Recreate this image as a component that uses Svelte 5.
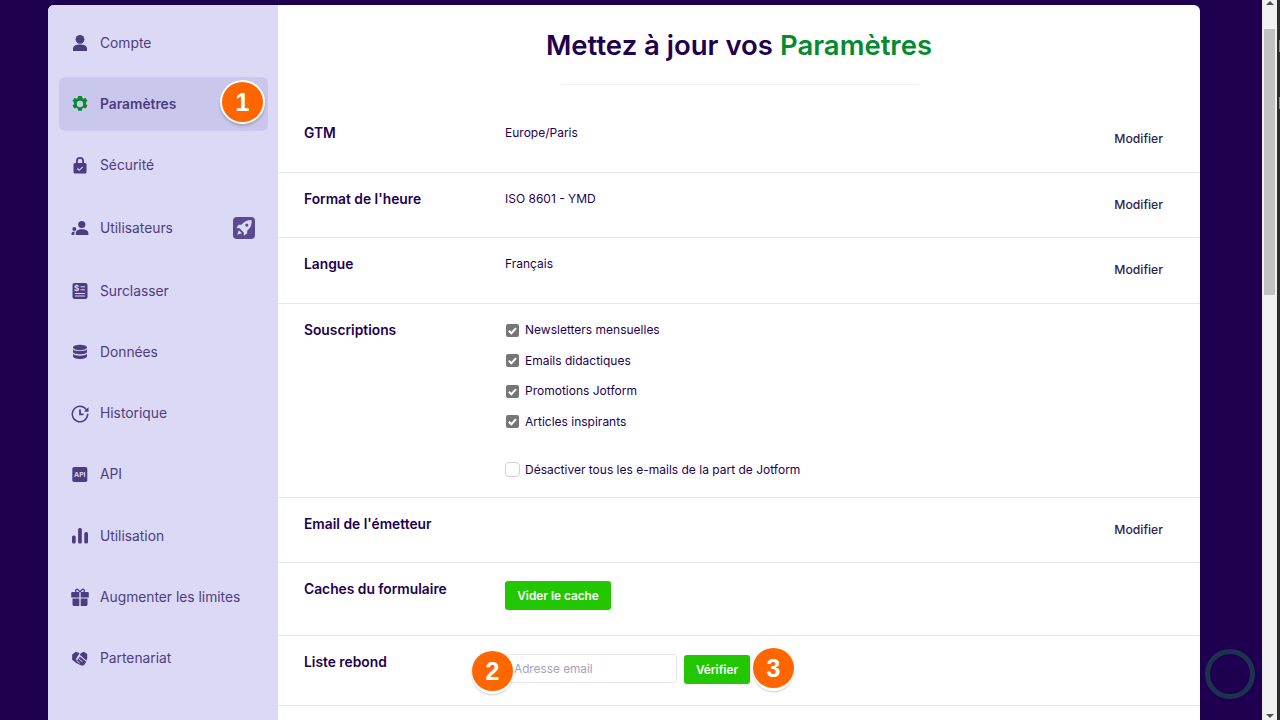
<script>
  const navItems = [
    { label: 'Compte', icon: 'user' },
    { label: 'Paramètres', icon: 'gear', active: true },
    { label: 'Sécurité', icon: 'lock' },
    { label: 'Utilisateurs', icon: 'users', tall: true, rocket: true },
    { label: 'Surclasser', icon: 'upgrade' },
    { label: 'Données', icon: 'data' },
    { label: 'Historique', icon: 'history' },
    { label: 'API', icon: 'api' },
    { label: 'Utilisation', icon: 'usage', mid: true },
    { label: 'Augmenter les limites', icon: 'gift' },
    { label: 'Partenariat', icon: 'partner' }
  ];

  const subscriptions = ['Newsletters mensuelles', 'Emails didactiques', 'Promotions Jotform', 'Articles inspirants'];
</script>

<div class="page">
  <div class="viewport">
    <div class="panel">
      <aside class="sidebar">
        {#each navItems as item}
          <div class="nav-item" class:active={item.active} class:tall={item.tall} class:mid={item.mid}>
            <svg class="nav-icon" viewBox="0 0 20 20">
              {#if item.icon === 'user'}
                <circle cx="10" cy="6.300" r="4.400" />
                <path d="M3 18v-2.300c0-2.800 2.600-4.200 7-4.200s7 1.400 7 4.200V18z" />
              {:else if item.icon === 'gear'}
                <path fill-rule="evenodd" d="M8.200 2h3.600l.5 2.100 1.400.7 2-.8 1.800 3-1.600 1.400v1.800l1.600 1.400-1.800 3-2-.8-1.400.7-.5 2.300H8.200l-.5-2.300-1.400-.7-2 .8-1.800-3 1.600-1.400V8.400L2.500 7l1.800-3 2 .8 1.400-.7zM10 6.800a3.200 3.200 0 1 0 0 6.400 3.200 3.200 0 0 0 0-6.400z" />
              {:else if item.icon === 'lock'}
                <path fill-rule="evenodd" d="M6 8V6a4 4 0 0 1 8 0v2h1a1.500 1.500 0 0 1 1.500 1.500V17a1.500 1.500 0 0 1-1.500 1.500H5A1.500 1.500 0 0 1 3.500 17V9.500A1.500 1.500 0 0 1 5 8zm1.800 0h4.400V6a2.200 2.200 0 0 0-4.400 0z" />
                <path d="M7.300 13.500l2 1.800 3.400-3.400" fill="none" stroke="#dcd9f6" stroke-width="1.100" />
              {:else if item.icon === 'users'}
                <circle cx="11.800" cy="6.500" r="3.600" />
                <path d="M5.800 17v-2c0-2.500 2.500-3.700 6-3.700s6.500 1.200 6.500 3.700v2z" />
                <circle cx="4.300" cy="11" r="2" />
                <path d="M1.500 17v-1.300c0-1.500 1.200-2.200 3.300-2.200-.4.800-.6 2-.6 3.500z" />
              {:else if item.icon === 'upgrade'}
                <rect x="2.500" y="2" width="15" height="16" rx="2" />
                <text x="6.700" y="9.700" class="icon-text dollar">$</text>
                <path d="M10.500 5.800h4.500M10.500 8.800h4.500M5 12.500h10M5 15h10" stroke="#dcd9f6" stroke-width="1" />
              {:else if item.icon === 'data'}
                <ellipse cx="10" cy="5.500" rx="7" ry="2.700" />
                <path d="M3 7.400V10c0 1.300 3.100 2.300 7 2.300s7-1 7-2.300V7.400c-1.400 1.100-4 1.700-7 1.700s-5.600-.6-7-1.700z" />
                <path d="M3 12v2.300C3 15.800 6.100 17 10 17s7-1.200 7-2.700V12c-1.400 1.100-4 1.700-7 1.700s-5.600-.6-7-1.700z" />
              {:else if item.icon === 'history'}
                <g transform="translate(0 .8)">
                  <path d="M17 7A7.700 7.700 0 1 0 17.700 10" fill="none" stroke="currentColor" stroke-width="1.500" />
                  <path d="M18.500 3.500V8h-4.500z" />
                  <path d="M10 5.800v4.700h3.500" fill="none" stroke="currentColor" stroke-width="1.800" />
                </g>
              {:else if item.icon === 'api'}
                <rect x="2.300" y="3" width="15" height="15" rx="1.800" />
                <text x="9.800" y="13" class="icon-text">API</text>
              {:else if item.icon === 'usage'}
                <rect x="2" y="9.500" width="3.700" height="8" rx="1.500" />
                <rect x="8.100" y="2" width="3.700" height="15.500" rx="1.500" />
                <rect x="14.300" y="6" width="3.700" height="11.500" rx="1.500" />
              {:else if item.icon === 'gift'}
                <path d="M1.200 6a1 1 0 0 1 1-1h7.100v5.400H1.200zM10.700 5h7.100a1 1 0 0 1 1 1v4.400h-8.100zM2.500 11.400h6.800V19H4a1.500 1.500 0 0 1-1.500-1.500zM10.700 11.400h6.800v6.100A1.500 1.500 0 0 1 16 19h-5.300z" />
                <path d="M10 5C9 3.500 7.800 2 6.600 2.300 5.300 2.600 5.300 4.500 6.500 5M10 5c1-1.500 2.200-3 3.400-2.700 1.300.3 1.300 2.200.1 2.700" fill="none" stroke="currentColor" stroke-width="1.300" />
              {:else}
                <path d="M2.200 6.500l3.600-2.700 3.700 1.300-1 1.800-2.300 3.600c-.5 1 .9 1.800 1.500.9l2.200-3 6.400 5.400-1.800 2.600c-.9 1.200-2.400 1.500-3.800.8l-4.500-2.200-2.400-2-1.700-1.300z" />
                <path d="M10.700 5.200l3-1.400 3.500 2.300v4.900l-.9 1.600-5.100-4.600-1.300-.9z" />
                <path d="M6.400 12.200l3.300 3M8.700 10.700l3.700 3.200" fill="none" stroke="#dcd9f6" stroke-width="1" />
              {/if}
            </svg>
            <span class="nav-label">{item.label}</span>
            {#if item.rocket}
              <span class="rocket">
                <svg viewBox="0 0 22 22" width="22" height="22">
                  <path fill="#dcd9f6" d="M18.500 3C14 3 10.800 4.500 8.500 7.800H5.700L3.300 11l3.300.3 4.100 4.100.3 3.300 3.200-2.400v-2.800c3.300-2.300 4.800-5.500 4.300-11zM13.800 6.500a1.600 1.600 0 1 1 0 3.200 1.600 1.600 0 0 1 0-3.200z" />
                  <path fill="#dcd9f6" d="M5.800 13.200l3 3-4.500 1.500z" />
                </svg>
              </span>
            {/if}
          </div>
        {/each}
      </aside>

      <main class="content">
        <header class="head">
          <h1>Mettez à jour vos <span class="accent">Paramètres</span></h1>
          <div class="head-rule"></div>
        </header>

        <section class="row r66">
          <div class="label">GTM</div>
          <div class="value">Europe/Paris</div>
          <div class="edit">Modifier</div>
        </section>
        <section class="row">
          <div class="label">Format de l'heure</div>
          <div class="value">ISO 8601 - YMD</div>
          <div class="edit">Modifier</div>
        </section>
        <section class="row r66">
          <div class="label">Langue</div>
          <div class="value">Français</div>
          <div class="edit">Modifier</div>
        </section>
        <section class="row subs">
          <div class="label">Souscriptions</div>
          <div class="value">
            {#each subscriptions as sub}
              <div class="check-line">
                <span class="box checked">
                  <svg viewBox="0 0 14 14" width="13" height="13"><path d="M3 7.200l2.800 2.800 5-5.600" fill="none" stroke="#fff" stroke-width="2.200" /></svg>
                </span>
                {sub}
              </div>
            {/each}
            <div class="check-line opt-out"><span class="box"></span>Désactiver tous les e-mails de la part de Jotform</div>
          </div>
        </section>
        <section class="row">
          <div class="label">Email de l'émetteur</div>
          <div class="value"></div>
          <div class="edit">Modifier</div>
        </section>
        <section class="row cache">
          <div class="label">Caches du formulaire</div>
          <div class="value"><button class="green wide">Vider le cache</button></div>
        </section>
        <section class="row bounce">
          <div class="label">Liste rebond</div>
          <div class="value inline">
            <input class="email" placeholder="Adresse email" />
            <button class="green small">Vérifier</button>
          </div>
        </section>
      </main>
    </div>

    <span class="badge b1">1</span>
    <span class="badge b2">2</span>
    <span class="badge b3">3</span>
    <span class="ring"></span>
  </div>

  <div class="scrollbar">
    <span class="arrow up"></span>
    <span class="thumb"></span>
    <span class="arrow down"></span>
  </div>
  <div class="edge">
    <span class="notch"></span>
    <span class="notch"></span>
  </div>
</div>

<style>
  :global(body) {
    margin: 0;
    overflow: hidden;
  }

  .page {
    display: flex;
    width: 1280px;
    height: 720px;
    overflow: hidden;
    font-family: Inter, "Liberation Sans", sans-serif;
  }

  .viewport {
    position: relative;
    flex: 1;
    background: #1f0050;
    padding: 5px 62px 0 48px;
    overflow: hidden;
  }

  .panel {
    display: flex;
    height: 760px;
    background: #fff;
    border-radius: 6px 6px 0 0;
    overflow: hidden;
  }

  .sidebar {
    width: 230px;
    flex-shrink: 0;
    box-sizing: border-box;
    background: #dcd9f6;
    padding: 11px 10px 0 11px;
    display: flex;
    flex-direction: column;
    gap: 7px;
  }

  .nav-item {
    height: 54px;
    display: flex;
    align-items: center;
    padding: 0 13px;
    border-radius: 6px;
    color: #4c3d80;
    flex-shrink: 0;
  }

  .nav-item.tall {
    height: 58px;
  }

  .nav-item.mid {
    height: 55px;
  }

  .nav-item.active {
    background: #cac7ec;
    font-weight: 600;
  }

  .nav-icon {
    width: 20px;
    height: 20px;
    margin-left: -2px;
    margin-right: 10px;
    fill: currentColor;
    flex-shrink: 0;
  }

  .active .nav-icon {
    color: #058b2f;
  }

  .icon-text {
    font-size: 6.800px;
    font-weight: 700;
    fill: #dcd9f6;
    text-anchor: middle;
  }

  .dollar {
    font-size: 8px;
  }

  .nav-label {
    font-size: 13.800px;
  }

  .rocket {
    margin-left: auto;
    width: 22px;
    height: 22px;
    border-radius: 4px;
    background: #5c4a90;
    display: flex;
  }

  .content {
    flex: 1;
    color: #1f0050;
  }

  .head {
    height: 102px;
    display: flex;
    flex-direction: column;
    align-items: center;
  }

  h1 {
    margin: 23px 0 0;
    font-size: 27.500px;
    line-height: 34px;
    font-weight: 600;
  }

  .accent {
    color: #058b2f;
  }

  .head-rule {
    width: 357px;
    height: 1px;
    background: #f1f1f4;
    margin-top: 22px;
  }

  .row {
    display: flex;
    box-sizing: border-box;
    height: 65px;
    padding: 17px 37px 0 26px;
    border-bottom: 1px solid #e6e6f0;
  }

  .row.r66 {
    height: 66px;
  }

  .label {
    width: 201px;
    flex-shrink: 0;
    font-size: 13.800px;
    line-height: 18px;
    font-weight: 600;
  }

  .value {
    flex: 1;
    font-size: 12px;
    line-height: 18px;
  }

  .edit {
    font-size: 12.200px;
    font-weight: 500;
    line-height: 16px;
    color: #2c2250;
    margin-top: 7px;
  }

  .subs {
    height: 194px;
  }

  .check-line {
    display: flex;
    align-items: center;
    gap: 6px;
    height: 18px;
    margin-bottom: 12.500px;
  }

  .opt-out {
    margin-top: 30px;
  }

  .box {
    width: 15px;
    height: 15px;
    margin-right: -1px;
    box-sizing: border-box;
    border-radius: 4px;
    border: 1px solid #cfcfe6;
    background: #fff;
    display: flex;
  }

  .box.checked {
    width: 13px;
    height: 13px;
    margin: 0 0 0 1px;
    border-radius: 2px;
    background: #767676;
    border: 0;
  }

  .cache {
    height: 73px;
  }

  .cache .value {
    padding-top: 1px;
  }

  .bounce {
    height: 70px;
  }

  button {
    border: 0;
    border-radius: 3px;
    background: #22c700;
    color: #fff;
    font-family: inherit;
    font-weight: 600;
    font-size: 11.800px;
    padding: 0;
  }

  .wide {
    width: 106px;
    height: 29px;
  }

  .inline {
    display: flex;
    align-items: flex-start;
    gap: 7px;
    padding-top: 1px;
  }

  .email {
    width: 172px;
    height: 29px;
    box-sizing: border-box;
    border: 1px solid #e6e6f0;
    border-radius: 3px;
    padding: 0 8px;
    font-family: inherit;
    font-size: 11.800px;
  }

  .email::placeholder {
    color: #a2a3ba;
  }

  .small {
    width: 66px;
    height: 29px;
    margin-top: 1px;
  }

  .badge {
    position: absolute;
    width: 41px;
    height: 40px;
    border-radius: 50%;
    background: #ff6600;
    color: #fff;
    font-family: "Liberation Sans", sans-serif;
    font-weight: 700;
    font-size: 25px;
    display: flex;
    align-items: center;
    justify-content: center;
  }

  .b1 {
    left: 222px;
    top: 82px;
    box-shadow: 0 0 0 2px #fff, 0 2px 3px 2px rgba(0, 0, 0, 0.2);
  }

  .b2 {
    left: 472px;
    top: 651px;
    box-shadow: 0 3px 0 #fff, 0 4px 2px rgba(0, 0, 0, 0.2);
  }

  .b3 {
    left: 753px;
    top: 648px;
    box-shadow: 0 3px 0 #fff, 0 4px 2px rgba(0, 0, 0, 0.2);
  }

  .ring {
    position: absolute;
    left: 1205px;
    top: 649px;
    width: 50px;
    height: 50px;
    box-sizing: border-box;
    border: 5px solid #1b3350;
    border-radius: 50%;
  }

  .scrollbar {
    width: 15px;
    flex-shrink: 0;
    background: #f0f0f0;
    display: flex;
    flex-direction: column;
    align-items: center;
  }

  .thumb {
    width: 11px;
    height: 266px;
    margin-top: 24px;
    flex-shrink: 0;
    background: #c1c1c1;
  }

  .arrow {
    width: 0;
    height: 0;
    border-left: 4px solid transparent;
    border-right: 4px solid transparent;
  }

  .up {
    margin-top: 1px;
    border-bottom: 4px solid #505050;
  }

  .down {
    margin-top: auto;
    margin-bottom: 2px;
    border-top: 4px solid #505050;
  }

  .edge {
    width: 3px;
    flex-shrink: 0;
    background: #2a2c30;
    display: flex;
    flex-direction: column;
    align-items: flex-end;
    gap: 45px;
    padding-top: 40px;
    box-sizing: border-box;
  }

  .notch {
    width: 1px;
    height: 12px;
    background: #8a8a8a;
  }
</style>
